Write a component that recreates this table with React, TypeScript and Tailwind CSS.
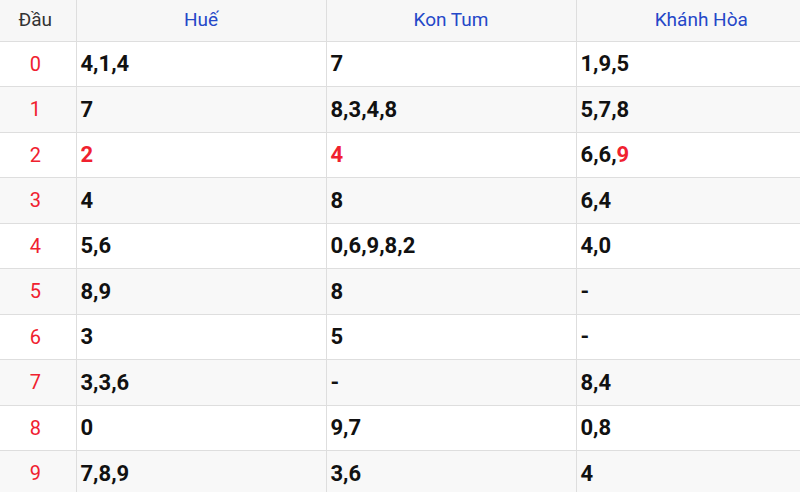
const rows: { d: string; cells: (string | { t: string; red?: number[] })[] }[] = [
    { d: '0', cells: ['4,1,4', '7', '1,9,5'] },
    { d: '1', cells: ['7', '8,3,4,8', '5,7,8'] },
    { d: '2', cells: [{ t: '2', red: [0] }, { t: '4', red: [0] }, { t: '6,6,9', red: [2] }] },
    { d: '3', cells: ['4', '8', '6,4'] },
    { d: '4', cells: ['5,6', '0,6,9,8,2', '4,0'] },
    { d: '5', cells: ['8,9', '8', '-'] },
    { d: '6', cells: ['3', '5', '-'] },
    { d: '7', cells: ['3,3,6', '-', '8,4'] },
    { d: '8', cells: ['0', '9,7', '0,8'] },
    { d: '9', cells: ['7,8,9', '3,6', '4'] },
];

function Cell({ v }: { v: string | { t: string; red?: number[] } }) {
    if (typeof v === 'string') return <>{v}</>;
    const parts = v.t.split(',');
    return (
        <>
            {parts.map((p, i) => (
                <span key={i}>
                    {i > 0 && ','}
                    <span className={v.red?.includes(i) ? 'text-[#f0212f]' : ''}>{p}</span>
                </span>
            ))}
        </>
    );
}

export default function App() {
    return (
        <div className="h-[492px] w-[800px] overflow-hidden bg-white font-['Roboto',sans-serif]">
            <table className="w-[826px] table-fixed border-collapse">
                <colgroup>
                    <col className="w-[76px]" />
                    <col className="w-[250px]" />
                    <col className="w-[250px]" />
                    <col className="w-[250px]" />
                </colgroup>
                <thead>
                    <tr className="h-[41px] bg-[#f7f7f7] text-[19px]">
                        <th className="border-r border-b border-[#dedede] pr-[5px] text-center font-normal text-[#333]">
                            Đầu
                        </th>
                        <th className="border-r border-b border-[#dedede] text-center font-normal text-[#2548c8]">
                            Huế
                        </th>
                        <th className="border-r border-b border-[#dedede] text-center font-normal text-[#2548c8]">
                            Kon Tum
                        </th>
                        <th className="border-b border-[#dedede] text-center font-normal text-[#2548c8]">
                            Khánh Hòa
                        </th>
                    </tr>
                </thead>
                <tbody>
                    {rows.map((r, i) => (
                        <tr
                            key={r.d}
                            className={`h-[45.5px] ${i % 2 === 1 ? 'bg-[#f8f8f8]' : 'bg-white'}`}
                        >
                            <td className="border-r border-b border-[#dedede] pr-[5px] text-center text-[20px] text-[#f0212f]">
                                {r.d}
                            </td>
                            {r.cells.map((c, j) => (
                                <td
                                    key={j}
                                    className={`border-b border-[#dedede] pl-[4px] text-[22px] font-bold text-[#111] ${j < 2 ? 'border-r' : ''}`}
                                >
                                    <Cell v={c} />
                                </td>
                            ))}
                        </tr>
                    ))}
                </tbody>
            </table>
        </div>
    );
}
